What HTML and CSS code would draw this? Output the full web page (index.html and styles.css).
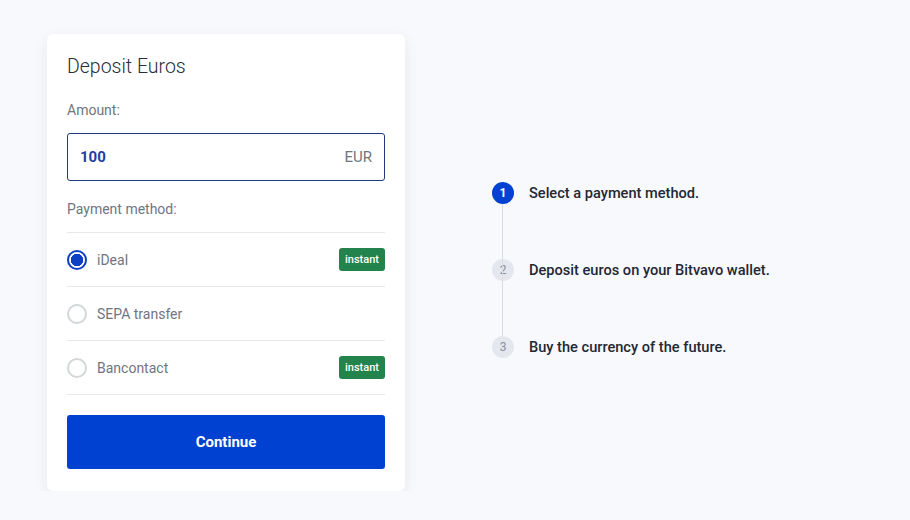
FILE: index.html
```html
<!DOCTYPE html>
<html lang="en">
<head>
    <meta charset="UTF-8">
    <meta name="viewport" content="width=device-width, initial-scale=1.0">
    <title>Deposit Euros</title>
    <link rel="stylesheet" href="styles.css">
</head>
<body>
    <div class="page">
        <div class="card">
            <h1 class="title">Deposit Euros</h1>

            <div class="label">Amount:</div>
            <div class="amount">
                <span class="amount-value">100</span>
                <span class="amount-currency">EUR</span>
            </div>

            <div class="label">Payment method:</div>
            <ul class="methods">
                <li class="method">
                    <span class="radio checked"></span>
                    <span class="method-name">iDeal</span>
                    <span class="badge">instant</span>
                </li>
                <li class="method">
                    <span class="radio"></span>
                    <span class="method-name">SEPA transfer</span>
                </li>
                <li class="method">
                    <span class="radio"></span>
                    <span class="method-name">Bancontact</span>
                    <span class="badge">instant</span>
                </li>
            </ul>

            <button class="continue">Continue</button>
        </div>

        <ol class="steps">
            <li class="step active"><span class="step-num">1</span>Select a payment method.</li>
            <li class="step"><span class="step-num">2</span>Deposit euros on your Bitvavo wallet.</li>
            <li class="step"><span class="step-num">3</span>Buy the currency of the future.</li>
        </ol>
    </div>
</body>
</html>
```

FILE: styles.css
```css
body {
    margin: 0;
    background-color: #f8f9fc;
    font-family: Roboto, "Liberation Sans", sans-serif;
    color: #232833;
}
.page {
    display: flex;
    align-items: flex-start;
    padding: 34px 0 0 47px;
}
.card {
    width: 318px;
    padding: 20px 20px 22px;
    background: #fff;
    border-radius: 6px;
    box-shadow: 0 4px 14px rgba(30, 40, 70, 0.08);
}
.title {
    margin: 0;
    font-size: 19.5px;
    font-weight: 300;
    line-height: 26px;
    color: #282d38;
}
.label {
    margin-top: 21px;
    font-size: 14px;
    line-height: 18px;
    color: #6f7580;
}
.amount {
    display: flex;
    justify-content: space-between;
    align-items: center;
    height: 46px;
    margin-top: 14px;
    padding: 0 12px;
    border: 1px solid #1e3b80;
    border-radius: 3px;
}
.amount-value {
    font-size: 15px;
    font-weight: 700;
    color: #1b3fa6;
}
.amount-currency {
    font-size: 15px;
    color: #6f7580;
}
.amount + .label {
    margin-top: 19px;
}
.methods {
    list-style: none;
    margin: 14px 0 0;
    padding: 0;
    border-top: 1px solid #e6e8ec;
}
.method {
    display: flex;
    align-items: center;
    height: 53px;
    border-bottom: 1px solid #e6e8ec;
}
.radio {
    box-sizing: border-box;
    width: 20px;
    height: 20px;
    border: 2px solid #d2d5da;
    border-radius: 50%;
}
.radio.checked {
    border-color: #0f3fc4;
    background: radial-gradient(circle, #0f3fc4 0 6px, #fff 6.5px);
}
.method-name {
    flex: 1;
    margin-left: 10px;
    font-size: 14px;
    color: #6f7580;
}
.badge {
    padding: 0 6px;
    height: 23px;
    line-height: 23px;
    font-size: 11px;
    font-weight: 500;
    color: #fff;
    background: #23834c;
    border-radius: 3px;
}
.continue {
    display: block;
    width: 100%;
    height: 54px;
    margin-top: 20px;
    border: 0;
    border-radius: 3px;
    background: #0041d1;
    color: #fff;
    font-family: inherit;
    font-size: 15px;
    font-weight: 700;
}
.steps {
    position: relative;
    list-style: none;
    margin: 148px 0 0 87px;
    padding: 0;
    display: flex;
    flex-direction: column;
    gap: 55px;
}
.steps::before {
    content: "";
    position: absolute;
    left: 10px;
    top: 22px;
    bottom: 22px;
    width: 1px;
    background: #d9dce2;
}
.step {
    display: flex;
    align-items: center;
    gap: 15px;
    height: 22px;
    font-size: 14.6px;
    font-weight: 500;
    color: #232833;
}
.step-num {
    width: 22px;
    height: 22px;
    line-height: 22px;
    text-align: center;
    border-radius: 50%;
    font-size: 12px;
    font-weight: 400;
    background: #e4e7ed;
    color: #8a909b;
}
.step.active .step-num {
    background: #0041d1;
    color: #fff;
    font-weight: 700;
}
```
